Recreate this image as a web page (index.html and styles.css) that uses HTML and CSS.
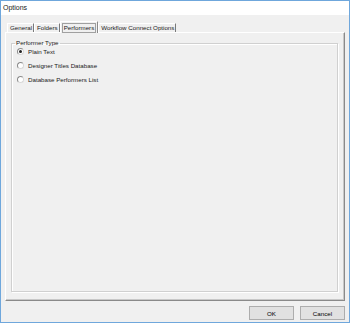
FILE: index.html
```html
<!DOCTYPE html>
<html lang="en">
<head>
  <meta charset="UTF-8">
  <title>Options</title>
  <link rel="stylesheet" href="styles.css">
</head>
<body>
  <div class="window">
    <div class="titlebar">Options</div>
    <div class="content">
      <div class="tabs">
        <div class="tab">General</div>
        <div class="tab">Folders</div>
        <div class="tab active"><span class="focus">Performers</span></div>
        <div class="tab">Workflow Connect Options</div>
      </div>
      <div class="panel">
        <fieldset class="group">
          <legend>Performer Type</legend>
          <label class="radio"><span class="circle checked"></span>Plain Text</label>
          <label class="radio"><span class="circle"></span>Designer Titles Database</label>
          <label class="radio"><span class="circle"></span>Database Performers List</label>
        </fieldset>
      </div>
      <div class="buttons">
        <button class="btn">OK</button>
        <button class="btn">Cancel</button>
      </div>
    </div>
  </div>
</body>
</html>
```

FILE: styles.css
```css
* {
  box-sizing: border-box;
}
body {
  margin: 0;
  font-family: "Liberation Sans", Arial, sans-serif;
  font-size: 6.2px;
  color: #1a1a1a;
}
.window {
  width: 350px;
  height: 323px;
  border: 1px solid #6fa7dc;
  background: #f0f0f0;
  display: flex;
  flex-direction: column;
}
.titlebar {
  height: 14px;
  line-height: 13px;
  background: #fff;
  padding-left: 2px;
  font-size: 7px;
}
.content {
  flex: 1;
  display: flex;
  flex-direction: column;
  padding: 6px 4px 2px 4px;
}
.tabs {
  height: 11px;
  display: flex;
  align-items: flex-end;
  padding-left: 2px;
}
.tab {
  height: 9px;
  line-height: 8px;
  padding: 0 1px 0 2px;
  border-top: 1px solid #fff;
  border-left: 1px solid #fff;
  border-right: 1px solid #7a7a7a;
  white-space: nowrap;
}
.tab.active {
  height: 12px;
  margin-bottom: -1px;
  padding: 1px 1px 0 1px;
  border: 1px solid #bdbdbd;
  border-top-color: #fff;
  border-left-color: #fff;
  border-right-color: #8a8a8a;
  border-bottom: none;
  background: #f0f0f0;
  position: relative;
}
.focus {
  display: block;
  line-height: 8px;
  padding: 0 1px;
  border: 1px solid #a0a0a0;
}
.panel {
  height: 269px;
  border-top: 1px solid #fff;
  border-left: 1px solid #fff;
  border-right: 1px solid #8a8a8a;
  border-bottom: 1px solid #8a8a8a;
  box-shadow: inset -1px -1px 0 #c8c8c8;
  padding: 6px 6px 8px 5px;
  display: flex;
}
.group {
  flex: 1;
  margin: 0;
  padding: 0 4px 0 2px;
  border: 1px solid #d0d0d0;
  box-shadow: inset 1px 1px 0 #fff, 1px 1px 0 #fff;
  display: flex;
  flex-direction: column;
}
.group legend {
  padding: 0 1px;
  margin-left: 1px;
  line-height: 8px;
}
.radio {
  display: flex;
  align-items: center;
  height: 14px;
  padding-left: 3px;
}
.radio:first-of-type {
  margin-top: -3px;
}
.circle {
  width: 7px;
  height: 7px;
  border-radius: 50%;
  border: 1px solid #8a8a8a;
  border-right-color: #d8d8d8;
  border-bottom-color: #d8d8d8;
  background: #fff;
  margin-right: 4px;
  display: flex;
  align-items: center;
  justify-content: center;
}
.circle.checked::after {
  content: "";
  width: 3px;
  height: 3px;
  border-radius: 50%;
  background: #222;
}
.buttons {
  display: flex;
  justify-content: flex-end;
  gap: 6px;
  margin-top: 5px;
}
.btn {
  width: 45px;
  height: 14px;
  padding: 0;
  font-family: inherit;
  font-size: 6.2px;
  background: #e1e1e1;
  border: 1px solid #adadad;
  color: #000;
}
```
